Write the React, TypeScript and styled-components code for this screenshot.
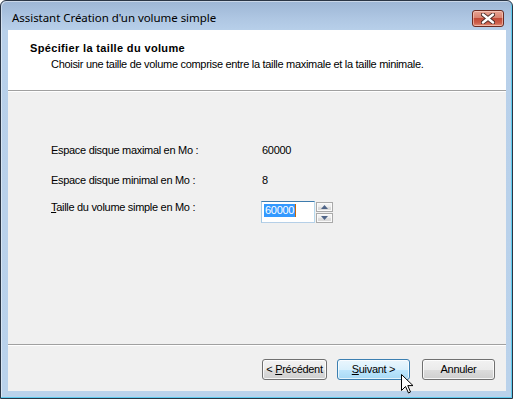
import React from "react";
import styled, { createGlobalStyle } from "styled-components";

const GlobalStyle = createGlobalStyle`
  html, body { margin: 0; padding: 0; overflow: hidden; background: #ffffff; }
  * { box-sizing: border-box; }
`;

const Window = styled.div`
  position: relative;
  width: 513px;
  height: 399px;
  display: flex;
  flex-direction: column;
  border: 1px solid #2a3545;
  border-radius: 6px 6px 0 0;
  background: linear-gradient(to bottom, #9db6d5 0px, #afc7e3 18px, #b8d0ea 30px, #bad2eb 100%);
  box-shadow: inset -1px -1px 0 #5ecbee, inset 1px 1px 0 rgba(255,255,255,0.45);
  font-family: "Liberation Sans", Arial, sans-serif;
  font-size: 11px;
  letter-spacing: -0.3px;
  color: #000;
`;

const TitleBar = styled.div`
  height: 29px;
  flex: none;
  display: flex;
  align-items: flex-start;
  justify-content: space-between;
  padding: 0 8px 0 11px;
`;

const TitleText = styled.span`
  font-family: "Noto Sans", "Open Sans", sans-serif;
  font-size: 11.5px;
  letter-spacing: -0.05px;
  line-height: 16px;
  margin-top: 9px;
  color: #000;
`;

const CloseButton = styled.div`
  margin-top: 9px;
  width: 32px;
  height: 17px;
  border: 1px solid #6b2b22;
  border-radius: 3px;
  background: linear-gradient(to bottom, #e8a493 0%, #d98371 45%, #c24a37 50%, #cd5f4b 80%, #e2917a 100%);
  box-shadow: inset 0 0 0 1px rgba(255, 220, 210, 0.55);
  display: flex;
  align-items: center;
  justify-content: center;
`;

const ClientRow = styled.div`
  flex: 1;
  display: flex;
  margin: 0 6px 7px 7px;
  min-height: 0;
`;

const Client = styled.div`
  flex: 1;
  display: flex;
  flex-direction: column;
  background: #f0f0f0;
`;

const Header = styled.div`
  height: 61px;
  flex: none;
  background: #ffffff;
  border-bottom: 1px solid #a0a0a0;
  box-shadow: 0 1px 0 #ffffff;
  padding: 12px 0 0 22px;
`;

const HeaderTitle = styled.div`
  font-weight: bold;
  font-size: 11px;
  letter-spacing: 0.35px;
  line-height: 13px;
`;

const HeaderSub = styled.div`
  font-size: 11px;
  line-height: 13px;
  margin: 3px 0 0 21px;
`;

const Body = styled.div`
  flex: 1;
  padding: 53px 0 0 43px;
  display: grid;
  grid-template-columns: 210px auto;
  grid-auto-rows: min-content;
  align-content: start;
`;

const Label = styled.div<{ $top: number }>`
  margin-top: ${(p) => p.$top}px;
  line-height: 13px;
  white-space: nowrap;
`;

const Value = styled.div<{ $top: number }>`
  margin-top: ${(p) => p.$top}px;
  line-height: 13px;
  padding-left: 1px;
`;

const U = styled.span`
  text-decoration: underline;
  text-underline-offset: 1px;
`;

const SpinRow = styled.div`
  margin-top: 14px;
  display: flex;
  align-items: flex-start;
`;

const TextBox = styled.div`
  width: 54px;
  height: 22px;
  background: #fff;
  border-style: solid;
  border-width: 1px;
  border-color: #3d7bad #b7d9ed #b5cfe7 #a4c9e3;
  padding: 2px 0 0 2px;
  display: flex;
  align-items: flex-start;
`;

const Selected = styled.span`
  background: #3399ff;
  color: #fff;
  line-height: 13px;
  height: 13px;
  padding: 0 1px;
`;

const Caret = styled.span`
  width: 1px;
  height: 13px;
  background: #cc6600;
`;

const Spinner = styled.div`
  margin: 1px 0 0 1px;
  width: 17px;
  height: 21px;
  display: flex;
  flex-direction: column;
  gap: 1px;
`;

const SpinButton = styled.div`
  flex: 1;
  border: 1px solid #a9a9a9;
  background: linear-gradient(to bottom, #f6f6f6 0%, #ececec 50%, #dedede 51%, #d6d6d6 100%);
  box-shadow: inset 0 0 0 1px #fafafa;
  display: flex;
  align-items: center;
  justify-content: center;
`;

const FooterSep = styled.div`
  height: 2px;
  flex: none;
  border-top: 1px solid #a0a0a0;
  border-bottom: 1px solid #ffffff;
`;

const Footer = styled.div`
  height: 45px;
  flex: none;
  display: flex;
  justify-content: flex-end;
  align-items: flex-start;
  padding: 13px 11px 0 0;
`;

const Button = styled.div<{ $w: number; $hot?: boolean; $gap: number }>`
  width: ${(p) => p.$w}px;
  height: 21px;
  margin-left: ${(p) => p.$gap}px;
  border: 1px solid ${(p) => (p.$hot ? "#3c7fb1" : "#707070")};
  border-radius: 3px;
  background: ${(p) =>
    p.$hot
      ? "linear-gradient(to bottom, #eaf6fd 0%, #d9f0fc 50%, #bee6fd 51%, #a7d9f5 100%)"
      : "linear-gradient(to bottom, #f2f2f2 0%, #ebebeb 50%, #dddddd 51%, #cfcfcf 100%)"};
  box-shadow: inset 0 0 0 1px ${(p) => (p.$hot ? "rgba(255,255,255,0.7)" : "rgba(255,255,255,0.8)")};
  display: flex;
  align-items: center;
  justify-content: center;
  line-height: 13px;
  padding-bottom: 1px;
`;

const Cursor = styled.svg`
  position: absolute;
  left: 399px;
  top: 372px;
`;

export default function App() {
  return (
    <>
      <GlobalStyle />
      <Window>
        <TitleBar>
          <TitleText>Assistant Création d'un volume simple</TitleText>
          <CloseButton>
            <svg width="14" height="11" viewBox="0 0 14 11">
              <path
                d="M2 1.5 L12 9.5 M12 1.5 L2 9.5"
                stroke="#4a2a26"
                strokeWidth="4.2"
                strokeLinecap="round"
              />
              <path
                d="M2 1.5 L12 9.5 M12 1.5 L2 9.5"
                stroke="#ffffff"
                strokeWidth="2.4"
                strokeLinecap="round"
              />
            </svg>
          </CloseButton>
        </TitleBar>
        <ClientRow>
          <Client>
            <Header>
              <HeaderTitle>Spécifier la taille du volume</HeaderTitle>
              <HeaderSub>
                Choisir une taille de volume comprise entre la taille maximale et la taille minimale.
              </HeaderSub>
            </Header>
            <Body>
              <Label $top={0}>Espace disque maximal en Mo :</Label>
              <Value $top={0}>60000</Value>
              <Label $top={17}>Espace disque minimal en Mo :</Label>
              <Value $top={17}>8</Value>
              <Label $top={14}>
                <U>T</U>aille du volume simple en Mo :
              </Label>
              <SpinRow>
                <TextBox>
                  <Selected>60000</Selected>
                  <Caret />
                </TextBox>
                <Spinner>
                  <SpinButton>
                    <svg width="7" height="4" viewBox="0 0 7 4">
                      <path d="M0 4 L3.5 0 L7 4 Z" fill="#4f6487" />
                    </svg>
                  </SpinButton>
                  <SpinButton>
                    <svg width="7" height="4" viewBox="0 0 7 4">
                      <path d="M0 0 L3.5 4 L7 0 Z" fill="#4f6487" />
                    </svg>
                  </SpinButton>
                </Spinner>
              </SpinRow>
            </Body>
            <FooterSep />
            <Footer>
              <Button $w={65} $gap={0}>
                &lt;&nbsp;<U>P</U>récédent
              </Button>
              <Button $w={73} $gap={10} $hot>
                <U>S</U>uivant &gt;
              </Button>
              <Button $w={73} $gap={12}>
                Annuler
              </Button>
            </Footer>
          </Client>
        </ClientRow>
        <Cursor width="14" height="22" viewBox="0 0 14 22">
          <path
            d="M1.5 1.5 L1.5 17.5 L5.5 13.5 L8.5 20 L10.5 19 L7.8 12.6 L13 12.6 Z"
            fill="#ffffff"
            stroke="#000000"
            strokeWidth="1"
            strokeLinejoin="miter"
          />
        </Cursor>
      </Window>
    </>
  );
}
